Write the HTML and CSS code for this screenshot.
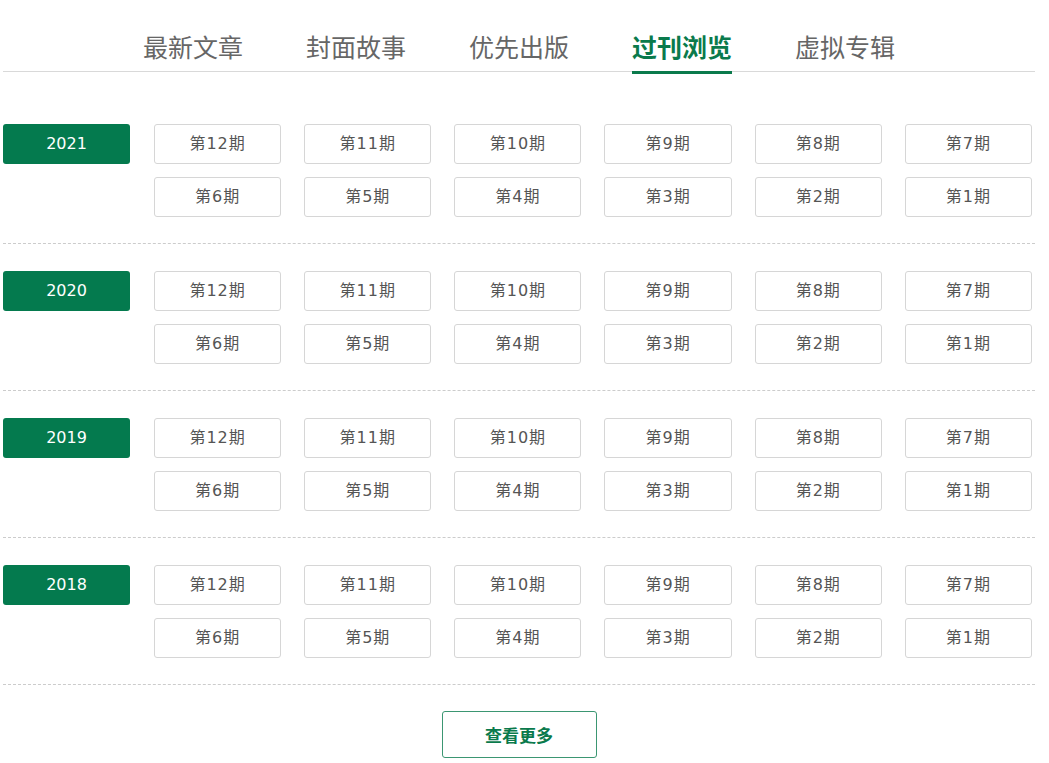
FILE: index.html
```html
<!DOCTYPE html>
<html>
<head>
  <title>过刊浏览</title>
  <link rel="stylesheet" href="styles.css">
</head>
<body>
  <div class="container">
    <ul class="tabs">
      <li>最新文章</li>
      <li>封面故事</li>
      <li>优先出版</li>
      <li class="active">过刊浏览</li>
      <li>虚拟专辑</li>
    </ul>

    <div class="year-block">
      <div class="year">2021</div>
      <div class="issues">
        <a>第12期</a><a>第11期</a><a>第10期</a><a>第9期</a><a>第8期</a><a>第7期</a>
        <a>第6期</a><a>第5期</a><a>第4期</a><a>第3期</a><a>第2期</a><a>第1期</a>
      </div>
    </div>

    <div class="year-block">
      <div class="year">2020</div>
      <div class="issues">
        <a>第12期</a><a>第11期</a><a>第10期</a><a>第9期</a><a>第8期</a><a>第7期</a>
        <a>第6期</a><a>第5期</a><a>第4期</a><a>第3期</a><a>第2期</a><a>第1期</a>
      </div>
    </div>

    <div class="year-block">
      <div class="year">2019</div>
      <div class="issues">
        <a>第12期</a><a>第11期</a><a>第10期</a><a>第9期</a><a>第8期</a><a>第7期</a>
        <a>第6期</a><a>第5期</a><a>第4期</a><a>第3期</a><a>第2期</a><a>第1期</a>
      </div>
    </div>

    <div class="year-block">
      <div class="year">2018</div>
      <div class="issues">
        <a>第12期</a><a>第11期</a><a>第10期</a><a>第9期</a><a>第8期</a><a>第7期</a>
        <a>第6期</a><a>第5期</a><a>第4期</a><a>第3期</a><a>第2期</a><a>第1期</a>
      </div>
    </div>

    <div class="more-wrap">
      <button class="more">查看更多</button>
    </div>
  </div>
</body>
</html>
```

FILE: styles.css
```css
body { margin: 0; background: #fff; font-family: "Noto Sans CJK SC", "Noto Sans", sans-serif; }
.container { width: 1032px; margin-left: 3px; }

.tabs { list-style: none; margin: 0; padding: 0; height: 71px; border-bottom: 1px solid #d9d9d9; display: flex; justify-content: center; gap: 63px; }
.tabs li { position: relative; font-size: 25px; line-height: 30px; padding-top: 31px; color: #666; cursor: pointer; }
.tabs li.active { color: #0a7a4c; font-weight: bold; }
.tabs li.active::after { content: ""; position: absolute; left: 0; right: 0; bottom: -3px; height: 3px; background: #0a7a4c; }

.year-block { display: flex; gap: 24px; padding: 26px 0; border-bottom: 1px dashed #ccc; }
.year-block:first-of-type { padding-top: 52px; }
.year-block + .year-block { padding-top: 27px; }
.year { width: 127px; height: 40px; flex: none; background: #047a4e; color: #fff; border-radius: 3px; font-size: 16px; line-height: 40px; text-align: center; font-family: "DejaVu Sans", "Noto Sans CJK SC", sans-serif; }
.issues { width: 878px; flex: none; display: grid; grid-template-columns: repeat(6, 1fr); column-gap: 23px; row-gap: 13px; }
.issues a { height: 38px; border: 1px solid #d6d6d6; border-radius: 3px; color: #555; font-size: 16px; line-height: 38px; letter-spacing: 1px; text-align: center; cursor: pointer; font-family: "DejaVu Sans", "Noto Sans CJK SC", sans-serif; }

.more-wrap { text-align: center; padding-top: 26px; }
.more { width: 155px; height: 47px; background: #fff; border: 1px solid #3b9672; border-radius: 3px; color: #0a7a4c; font-size: 17px; font-weight: bold; font-family: "Noto Sans CJK SC", sans-serif; }
```
